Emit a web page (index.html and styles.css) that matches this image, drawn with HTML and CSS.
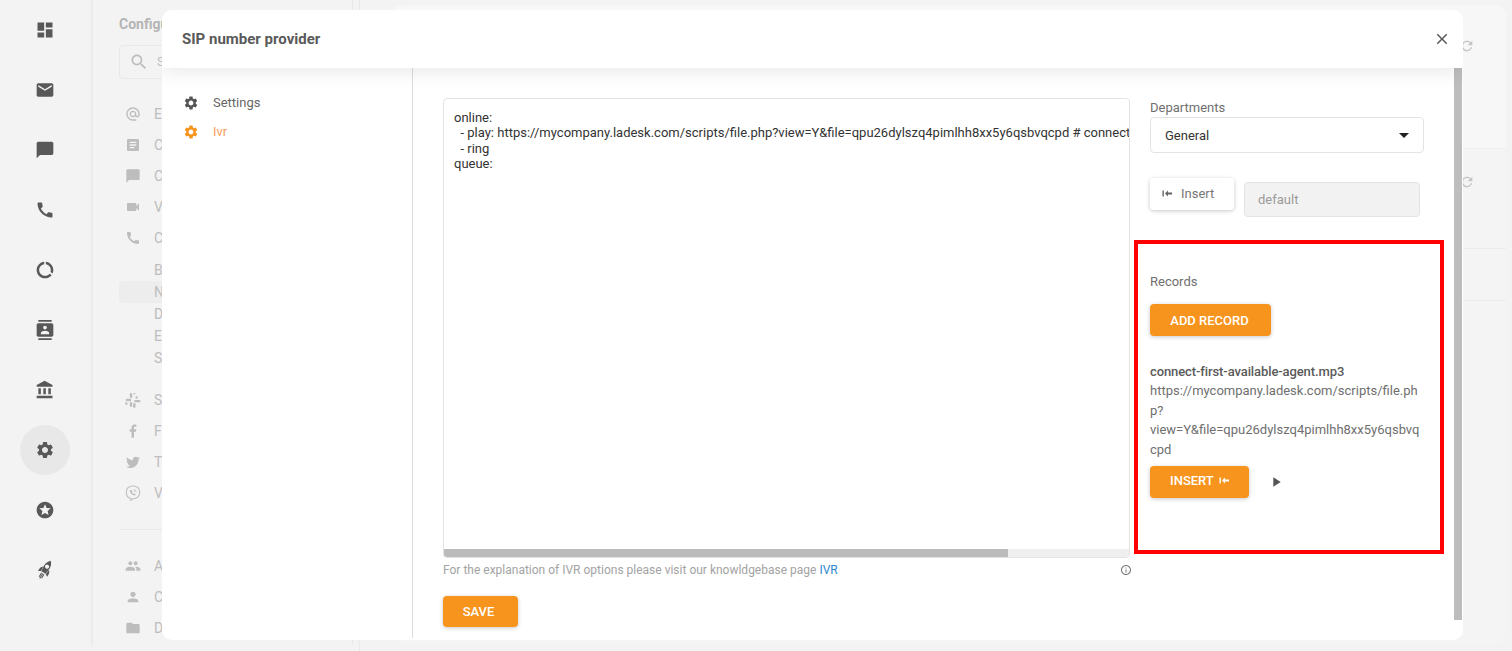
FILE: index.html
```html
<!DOCTYPE html>
<html lang="en">
<head>
<meta charset="utf-8">
<title>SIP number provider</title>
<link rel="stylesheet" href="styles.css">
</head>
<body>
<svg class="defs" width="0" height="0" aria-hidden="true">
  <symbol id="i-dash" viewBox="0 0 24 24"><path d="M3 13h8V3H3v10zm0 8h8v-6H3v6zm10 0h8V11h-8v10zm0-18v6h8V3h-8z"/></symbol>
  <symbol id="i-mail" viewBox="0 0 24 24"><path d="M20 4H4c-1.1 0-1.99.9-1.99 2L2 18c0 1.1.9 2 2 2h16c1.1 0 2-.9 2-2V6c0-1.1-.9-2-2-2zm0 4l-8 5-8-5V6l8 5 8-5v2z"/></symbol>
  <symbol id="i-chat" viewBox="0 0 24 24"><path d="M20 2H4c-1.1 0-2 .9-2 2v18l4-4h14c1.1 0 2-.9 2-2V4c0-1.1-.9-2-2-2z"/></symbol>
  <symbol id="i-call" viewBox="0 0 24 24"><path d="M20.01 15.38c-1.23 0-2.42-.2-3.53-.56-.35-.12-.74-.03-1.01.24l-1.57 1.97c-2.83-1.35-5.48-3.9-6.89-6.83l1.95-1.66c.27-.28.35-.67.24-1.02-.37-1.11-.56-2.3-.56-3.53 0-.54-.45-.99-.99-.99H4.19C3.65 3 3 3.24 3 3.99 3 13.28 10.73 21 20.01 21c.71 0 .99-.63.99-1.18v-3.45c0-.54-.45-.99-.99-.99z"/></symbol>
  <symbol id="i-donut" viewBox="0 0 24 24"><path d="M13 2.050v3.030c3.390.49 6 3.390 6 6.920 0 .9-.18 1.750-.48 2.540l2.600 1.530c.56-1.240.88-2.620.88-4.070 0-5.180-3.950-9.450-9-9.950zM12 19c-3.870 0-7-3.130-7-7 0-3.530 2.610-6.430 6-6.920V2.050c-5.060.5-9 4.760-9 9.950 0 5.520 4.470 10 9.990 10 3.310 0 6.240-1.610 8.060-4.090l-2.600-1.530C16.170 17.980 14.210 19 12 19z"/></symbol>
  <symbol id="i-contacts" viewBox="0 0 24 24"><path d="M20 0H4v2h16V0zM4 24h16v-2H4v2zM20 4H4c-1.1 0-2 .9-2 2v12c0 1.1.9 2 2 2h16c1.1 0 2-.9 2-2V6c0-1.1-.9-2-2-2zm-8 2.75c1.24 0 2.25 1.01 2.25 2.25s-1.01 2.25-2.25 2.25S9.75 10.24 9.75 9 10.76 6.75 12 6.75zM17 17H7v-1.5c0-1.67 3.33-2.5 5-2.5s5 .83 5 2.5V17z"/></symbol>
  <symbol id="i-bank" viewBox="0 0 24 24"><path d="M4 10v7h3v-7H4zm6 0v7h3v-7h-3zM2 22h19v-3H2v3zm14-12v7h3v-7h-3zm-4.5-9L2 6v2h19V6l-9.5-5z"/></symbol>
  <symbol id="i-gear" viewBox="0 0 24 24"><path d="M19.14 12.94c.04-.3.06-.61.06-.94 0-.32-.02-.64-.07-.94l2.03-1.58c.18-.14.23-.41.12-.61l-1.92-3.32c-.12-.22-.37-.29-.59-.22l-2.39.96c-.5-.38-1.03-.7-1.62-.94l-.36-2.54c-.04-.24-.24-.41-.48-.41h-3.84c-.24 0-.43.17-.47.41l-.36 2.54c-.59.24-1.13.57-1.62.94l-2.39-.96c-.22-.08-.47 0-.59.22L2.74 8.87c-.12.21-.08.47.12.61l2.03 1.58c-.05.3-.09.63-.09.94s.02.64.07.94l-2.03 1.58c-.18.14-.23.41-.12.61l1.92 3.32c.12.22.37.29.59.22l2.39-.96c.5.38 1.03.7 1.62.94l.36 2.54c.05.24.24.41.48.41h3.84c.24 0 .44-.17.47-.41l.36-2.54c.59-.24 1.13-.56 1.62-.94l2.39.96c.22.08.47 0 .59-.22l1.92-3.32c.12-.22.07-.47-.12-.61l-2.01-1.58zM12 15.6c-1.98 0-3.6-1.62-3.6-3.6s1.62-3.6 3.6-3.6 3.6 1.62 3.6 3.6-1.62 3.6-3.6 3.6z"/></symbol>
  <symbol id="i-star" viewBox="0 0 24 24"><path d="M11.99 2C6.47 2 2 6.48 2 12s4.47 10 9.99 10C17.52 22 22 17.52 22 12S17.52 2 11.99 2zm4.24 16L12 15.45 7.77 18l1.12-4.81-3.73-3.23 4.92-.42L12 5l1.92 4.53 4.92.42-3.73 3.23L16.23 18z"/></symbol>
  <symbol id="i-rocket" viewBox="0 0 24 24"><g transform="rotate(32 12 12)"><path fill-rule="evenodd" d="M12 -1C9.300 1.500 8.200 4.500 8.200 8c0 2.800.4 5.400 1 7.500h5.600c.6-2.100 1-4.700 1-7.500 0-3.500-1.100-6.500-3.800-9zM12 4.800a2.500 2.500 0 1 1 0 5 2.500 2.500 0 0 1 0-5z"/><path d="M8 9.500c-1.600 1.200-2.500 3-2.500 5.500v2.500L8.800 15.500C8.300 13.500 8 11.500 8 9.500zM16 9.500c1.600 1.200 2.500 3 2.500 5.500v2.500l-3.300-2c.5-2 .8-4 .8-6z"/><path d="M9.700 17h1.200v5.500H9.700zM11.400 17h1.200v7h-1.200zM13.100 17h1.200v5.500h-1.200z"/></g></symbol>
  <symbol id="i-search" viewBox="0 0 24 24"><path d="M15.500 14h-.79l-.28-.27C15.410 12.590 16 11.110 16 9.500 16 5.910 13.090 3 9.500 3S3 5.910 3 9.500 5.910 16 9.500 16c1.610 0 3.090-.59 4.230-1.570l.27.28v.79l5 4.990L20.490 19l-4.990-5zm-6 0C7.010 14 5 11.990 5 9.500S7.010 5 9.500 5 14 7.010 14 9.500 11.990 14 9.500 14z"/></symbol>
  <symbol id="i-at" viewBox="0 0 24 24"><path d="M12 2C6.480 2 2 6.480 2 12s4.480 10 10 10h5v-2h-5c-4.340 0-8-3.660-8-8s3.660-8 8-8 8 3.660 8 8v1.430c0 .79-.71 1.570-1.500 1.570s-1.500-.78-1.500-1.570V12c0-2.760-2.240-5-5-5s-5 2.240-5 5 2.240 5 5 5c1.380 0 2.640-.56 3.540-1.470.65.89 1.770 1.470 2.960 1.470 1.970 0 3.500-1.600 3.500-3.570V12c0-5.520-4.480-10-10-10zm0 13c-1.660 0-3-1.340-3-3s1.340-3 3-3 3 1.340 3 3-1.340 3-3 3z"/></symbol>
  <symbol id="i-article" viewBox="0 0 24 24"><path d="M19 3H5c-1.100 0-2 .9-2 2v14c0 1.100.9 2 2 2h14c1.100 0 2-.9 2-2V5c0-1.100-.9-2-2-2zm-5 14H7v-2h7v2zm3-4H7v-2h10v2zm0-4H7V7h10v2z"/></symbol>
  <symbol id="i-video" viewBox="0 0 24 24"><path d="M17 10.500V7c0-.55-.45-1-1-1H4c-.55 0-1 .45-1 1v10c0 .55.45 1 1 1h12c.55 0 1-.45 1-1v-3.500l4 4v-11l-4 4z"/></symbol>
  <symbol id="i-slack" viewBox="0 0 24 24"><path d="M9 1.500a1.800 1.800 0 0 0-1.800 1.800v5.200h3.600V3.300A1.800 1.800 0 0 0 9 1.500zM14 1.500a1.800 1.800 0 0 0-1.800 1.800v7h-10a1.800 1.800 0 0 0 0 3.400h7v-3.400h3v-7h3.600V3.300A1.800 1.800 0 0 0 14 1.500zM17.500 6.500a1.800 1.800 0 0 0-1.800 1.800v1.800h1.800a1.800 1.800 0 0 0 0-3.600zM14 12v3.500h7.800a1.800 1.800 0 0 0 0-3.500zM2 15.500a1.800 1.800 0 0 0 0 3.600h1.800v-1.800A1.800 1.800 0 0 0 2 15.500zM7.200 15.500v5.200a1.800 1.800 0 0 0 3.600 0v-5.200zM12.200 17v5a1.800 1.800 0 0 0 3.600 0v-5z"/></symbol>
  <symbol id="i-fb" viewBox="0 0 24 24"><path d="M13.500 22v-9h3l.5-3.500h-3.500V7.300c0-1 .3-1.700 1.700-1.700H17V2.400c-.3 0-1.400-.1-2.700-.1-2.700 0-4.500 1.600-4.500 4.600v2.600H7V13h2.800v9z"/></symbol>
  <symbol id="i-tw" viewBox="0 0 24 24"><path d="M22.460 6c-.77.35-1.600.58-2.460.69.88-.53 1.560-1.370 1.880-2.380-.83.5-1.750.85-2.720 1.050C18.370 4.500 17.260 4 16 4c-2.350 0-4.270 1.920-4.270 4.290 0 .34.04.67.11.98C8.280 9.090 5.110 7.380 3 4.790c-.37.63-.58 1.370-.58 2.150 0 1.490.75 2.810 1.910 3.560-.71 0-1.370-.2-1.950-.5v.03c0 2.080 1.480 3.820 3.440 4.210a4.220 4.220 0 0 1-1.930.07 4.280 4.280 0 0 0 4 2.980 8.521 8.521 0 0 1-5.330 1.840c-.34 0-.68-.02-1.020-.06C3.440 20.290 5.700 21 8.120 21 16 21 20.330 14.460 20.330 8.790c0-.19 0-.37-.01-.56.84-.6 1.560-1.360 2.140-2.230z"/></symbol>
  <symbol id="i-viber" viewBox="0 0 24 24"><path fill="none" stroke="currentColor" stroke-width="1.600" d="M12 1.500c6 0 10 2.500 10 9.500s-4 9.500-10 9.500l-3.300 2.700v-2.900C4 19.500 2 16.500 2 11 2 4 6 1.500 12 1.500z"/><path d="M8.500 7c-1 .5-1.300 1.500-.8 3 1 2.500 3 4.500 5.500 5.500 1.500.5 2.500 0 3-1 .2-.5-1.800-1.800-2.300-1.600l-.9.8c-1-.4-2.200-1.600-2.700-2.700l.8-.9c.2-.5-1.100-2.500-1.600-2.100zM13 6.500c2.300.2 4 1.900 4.200 4.200h-.9c-.2-1.800-1.500-3.100-3.300-3.300zM13 8.500c1.200.1 2 .9 2.100 2.100h-.9c-.1-.7-.5-1.100-1.200-1.200z"/></symbol>
  <symbol id="i-people" viewBox="0 0 24 24"><path d="M16 11c1.660 0 2.990-1.340 2.990-3S17.660 5 16 5c-1.660 0-3 1.340-3 3s1.340 3 3 3zm-8 0c1.660 0 2.990-1.340 2.990-3S9.660 5 8 5C6.340 5 5 6.340 5 8s1.340 3 3 3zm0 2c-2.330 0-7 1.170-7 3.500V19h14v-2.500c0-2.330-4.670-3.500-7-3.500zm8 0c-.29 0-.62.02-.97.05 1.160.84 1.970 1.970 1.970 3.450V19h6v-2.500c0-2.330-4.670-3.500-7-3.500z"/></symbol>
  <symbol id="i-person" viewBox="0 0 24 24"><path d="M12 12c2.210 0 4-1.790 4-4s-1.790-4-4-4-4 1.790-4 4 1.790 4 4 4zm0 2c-2.670 0-8 1.340-8 4v2h16v-2c0-2.660-5.330-4-8-4z"/></symbol>
  <symbol id="i-folder" viewBox="0 0 24 24"><path d="M10 4H4c-1.100 0-1.990.9-1.990 2L2 18c0 1.100.9 2 2 2h16c1.100 0 2-.9 2-2V8c0-1.100-.9-2-2-2h-8l-2-2z"/></symbol>
  <symbol id="i-close" viewBox="0 0 24 24"><path d="M19 6.410L17.590 5 12 10.590 6.410 5 5 6.410 10.590 12 5 17.590 6.410 19 12 13.410 17.590 19 19 17.590 13.410 12z"/></symbol>
  <symbol id="i-refresh" viewBox="0 0 24 24"><path d="M17.650 6.350C16.200 4.900 14.210 4 12 4c-4.420 0-7.990 3.580-7.990 8s3.570 8 7.990 8c3.730 0 6.840-2.550 7.730-6h-2.080c-.82 2.330-3.040 4-5.650 4-3.310 0-6-2.690-6-6s2.690-6 6-6c1.660 0 3.140.69 4.220 1.780L13 11h7V4l-2.350 2.350z"/></symbol>
  <symbol id="i-info" viewBox="0 0 24 24"><path d="M11 7h2v2h-2zm0 4h2v6h-2zm1-9C6.480 2 2 6.480 2 12s4.480 10 10 10 10-4.480 10-10S17.520 2 12 2zm0 18c-4.410 0-8-3.590-8-8s3.590-8 8-8 8 3.590 8 8-3.590 8-8 8z"/></symbol>
  <symbol id="i-play" viewBox="0 0 24 24"><path d="M8 5v14l11-7z"/></symbol>
  <symbol id="i-insert" viewBox="0 0 24 24"><path d="M1 5.500h3v13H1zM6.500 12L13 5.500v4.500h9v4h-9v4.500z"/></symbol>
</svg>

<div class="app">
  <nav class="rail">
    <a class="rail-item"><svg class="ico-20"><use href="#i-dash"/></svg></a>
    <a class="rail-item"><svg class="ico-20"><use href="#i-mail"/></svg></a>
    <a class="rail-item"><svg class="ico-20"><use href="#i-chat"/></svg></a>
    <a class="rail-item"><svg class="ico-20"><use href="#i-call"/></svg></a>
    <a class="rail-item"><svg class="ico-20"><use href="#i-donut"/></svg></a>
    <a class="rail-item"><svg class="ico-20"><use href="#i-contacts"/></svg></a>
    <a class="rail-item"><svg class="ico-20"><use href="#i-bank"/></svg></a>
    <a class="rail-item rail-active"><svg class="ico-20"><use href="#i-gear"/></svg></a>
    <a class="rail-item"><svg class="ico-20"><use href="#i-star"/></svg></a>
    <a class="rail-item"><svg class="ico-20"><use href="#i-rocket"/></svg></a>
  </nav>

  <aside class="config">
    <div class="config-title">Configuration</div>
    <div class="config-search"><svg class="ico-18"><use href="#i-search"/></svg><span>Search</span></div>
    <ul class="config-list">
      <li><svg class="ico-16"><use href="#i-at"/></svg>Email</li>
      <li><svg class="ico-16"><use href="#i-article"/></svg>Contact forms</li>
      <li><svg class="ico-16"><use href="#i-chat"/></svg>Chat</li>
      <li><svg class="ico-16"><use href="#i-video"/></svg>Video</li>
      <li><svg class="ico-16"><use href="#i-call"/></svg>Call</li>
    </ul>
    <ul class="config-sub">
      <li>Buttons</li>
      <li class="config-sub-active">Numbers</li>
      <li>Devices</li>
      <li>Extensions</li>
      <li>Settings</li>
    </ul>
    <ul class="config-list config-social">
      <li><svg class="ico-16"><use href="#i-slack"/></svg>Slack</li>
      <li><svg class="ico-16"><use href="#i-fb"/></svg>Facebook</li>
      <li><svg class="ico-16"><use href="#i-tw"/></svg>Twitter</li>
      <li><svg class="ico-16"><use href="#i-viber"/></svg>Viber</li>
    </ul>
    <ul class="config-list config-users">
      <li><svg class="ico-16"><use href="#i-people"/></svg>Agents</li>
      <li><svg class="ico-16"><use href="#i-person"/></svg>Customers</li>
      <li><svg class="ico-16"><use href="#i-folder"/></svg>Departments</li>
    </ul>
  </aside>

  <main class="page">
    <div class="page-inner">
      <section class="page-card page-card-top"><svg class="ico-16 page-refresh"><use href="#i-refresh"/></svg></section>
      <section class="page-card page-card-mid"><svg class="ico-16 page-refresh"><use href="#i-refresh"/></svg></section>
      <section class="page-card page-card-row"></section>
      <section class="page-card page-card-rest"></section>
    </div>
  </main>
</div>

<div class="modal">
  <header class="modal-head">
    <h1 class="modal-title">SIP number provider</h1>
    <svg class="modal-close"><use href="#i-close"/></svg>
  </header>
  <div class="modal-body">
    <nav class="modal-nav">
      <a class="modal-link"><svg class="ico-16"><use href="#i-gear"/></svg>Settings</a>
      <a class="modal-link modal-link-active"><svg class="ico-16"><use href="#i-gear"/></svg>Ivr</a>
    </nav>
    <div class="modal-main">
      <div class="editor-col">
        <div class="editor">
          <pre class="editor-text">online:
  - play: https://mycompany.ladesk.com/scripts/file.php?view=Y&amp;file=qpu26dylszq4pimlhh8xx5y6qsbvqcpd # connect-first-available-agent.mp3
  - ring
queue:</pre>
          <div class="editor-scroll"><div class="editor-thumb"></div></div>
        </div>
        <div class="hint">
          <span>For the explanation of IVR options please visit our knowldgebase page <a class="hint-link">IVR</a></span>
          <svg class="ico-12"><use href="#i-info"/></svg>
        </div>
        <button class="btn btn-orange btn-save">SAVE</button>
      </div>
      <div class="side-col">
        <label class="side-label">Departments</label>
        <div class="select"><span>General</span><i class="select-caret"></i></div>
        <div class="insert-row">
          <button class="btn btn-white"><svg class="ico-btn"><use href="#i-insert"/></svg>Insert</button>
          <div class="default-field">default</div>
        </div>
        <div class="records">
          <div class="records-label">Records</div>
          <button class="btn btn-orange btn-add">ADD RECORD</button>
          <div class="record-name">connect-first-available-agent.mp3</div>
          <div class="record-url">https://mycompany.ladesk.com/scripts/file.php?view=Y&amp;file=qpu26dylszq4pimlhh8xx5y6qsbvqcpd</div>
          <div class="record-actions">
            <button class="btn btn-orange btn-insert">INSERT<svg class="ico-btn"><use href="#i-insert"/></svg></button>
            <svg class="ico-play"><use href="#i-play"/></svg>
          </div>
        </div>
      </div>
      <div class="modal-scrollbar"></div>
    </div>
  </div>
</div>
</body>
</html>
```
FILE: styles.css
```css
* { box-sizing: border-box; }
html, body { margin: 0; height: 100%; overflow: hidden; }
body { background: #f3f3f3; font-family: Roboto, "Liberation Sans", sans-serif; font-size: 13px; color: #555; }
.defs { position: absolute; }
svg { fill: currentColor; display: block; flex: none; }
.ico-20 { width: 20px; height: 20px; }
.ico-18 { width: 20px; height: 20px; }
.ico-16 { width: 16px; height: 16px; }
.ico-12 { width: 12px; height: 12px; }
.ico-btn { width: 11px; height: 11px; }

.app { display: flex; height: 651px; }
.rail { width: 90px; flex: none; display: flex; flex-direction: column; align-items: center; padding-top: 5px; gap: 10px; }
.rail-item { width: 50px; height: 50px; display: flex; align-items: center; justify-content: center; color: #585858; border-radius: 50%; }
.rail-active { background: #e8e8e8; }

.config { width: 261px; flex: none; height: 645px; padding: 15px 0 0 26px; border-left: 1px solid #e9e9e9; border-right: 1px solid #e8e8e8; margin-left: 2px; box-shadow: -2px 0 0 #eeeeee; color: #bdbdbd; overflow: hidden; font-size: 14px; }
.config-title { font-weight: 700; font-size: 14px; line-height: 18px; color: #b5b5b5; }
.config-search { margin-top: 12px; height: 34px; width: 220px; border: 1px solid #e8e8e8; border-radius: 4px; display: flex; align-items: center; gap: 8px; padding-left: 9px; font-size: 12px; }
.config-list, .config-sub { list-style: none; margin: 0; padding: 0; }
.config-list li { height: 31px; display: flex; align-items: center; gap: 13px; padding-left: 6px; }
.config-list { margin-top: 19px; }
.config-sub { margin-top: 6px; margin-bottom: 15px; }
.config-sub li { height: 22px; line-height: 22px; padding-left: 35px; margin-right: 20px; border-radius: 4px; }
.config-sub-active { background: #ededed; }
.config-social { margin-top: 0; padding-bottom: 21px; border-bottom: 1px solid #e8e8e8; margin-right: 20px; }
.config-users { margin-top: 20px; }

.page { flex: 1; min-width: 0; padding: 5px 6px 6px 0; display: flex; border-left: 1px solid #e9e9e9; margin-left: 6px; }
.page-inner { flex: 1; margin-left: 32px; display: flex; flex-direction: column; border-radius: 10px; overflow: hidden; background: #f4f4f4; }
.page-card { position: relative; }
.page-card-top { height: 143px; background: #f7f7f7; }
.page-card-mid { height: 100px; border-top: 1px solid #efefef; }
.page-card-row { height: 52px; border-top: 1px solid #ececec; }
.page-card-rest { flex: 1; border-top: 1px solid #ececec; }
.page-refresh { position: absolute; right: 31px; top: 33px; color: #c4c4c4; }
.page-card-mid .page-refresh { top: 25px; }

.modal { position: absolute; left: 162px; top: 10px; width: 1301px; height: 630px; background: #fff; border-radius: 10px; display: flex; flex-direction: column; overflow: hidden; }
.modal-head { height: 58px; flex: none; display: flex; align-items: center; justify-content: space-between; padding: 0 12px 0 20px; box-shadow: 0 4px 18px rgba(0,0,0,.09); position: relative; z-index: 1; background: #fff; }
.modal-title { margin: 0; font-size: 15px; font-weight: 700; color: #5a5a5a; }
.modal-close { width: 18px; height: 18px; color: #5a5a5a; }
.modal-body { flex: 1; display: flex; min-height: 0; }
.modal-nav { width: 251px; flex: none; height: 570px; border-right: 1px solid #dcdcdc; padding-top: 20px; }
.modal-link { height: 29px; display: flex; align-items: center; gap: 14px; padding-left: 21px; font-size: 13px; color: #666; }
.modal-link svg { color: #555; }
.modal-link-active { color: #f9a05a; }
.modal-link-active svg { color: #f7941d; }

.modal-main { flex: 1; min-width: 0; display: flex; padding: 30px 0 0 30px; position: relative; }
.editor-col { width: 687px; flex: none; }
.editor { height: 460px; border: 1px solid #e3e3e3; border-radius: 4px; display: flex; flex-direction: column; overflow: hidden; }
.editor-text { flex: 1; margin: 0; padding: 11px 0 0 10px; font-family: Roboto, "Liberation Sans", sans-serif; font-size: 13px; line-height: 15.300px; color: #333; overflow: hidden; white-space: pre; }
.editor-scroll { height: 8px; background: #efefef; flex: none; }
.editor-thumb { width: 564px; height: 8px; background: #bbb; }
.hint { display: flex; justify-content: space-between; align-items: center; padding-top: 4px; height: 20px; font-size: 12px; color: #a3a3a3; }
.hint svg { color: #777; margin-right: -2px; }
.hint-link { color: #2b87d0; }

.btn { font-family: Roboto, "Liberation Sans", sans-serif; font-size: 13px; border: 0; border-radius: 4px; display: flex; align-items: center; padding: 0; }
.btn-orange { background: #f7941d; color: #fff; font-weight: 500; box-shadow: 0 1px 4px rgba(0,0,0,.22); }
.btn-save { width: 75px; height: 31px; margin-top: 18px; justify-content: center; padding-right: 4px; }
.btn-white { width: 84px; height: 32px; background: #fff; color: #777; gap: 8px; padding: 0 0 2px 12px; box-shadow: 0 1px 4px rgba(0,0,0,.22); }
.btn-white .ico-btn { color: #666; }

.side-col { width: 274px; margin-left: 20px; flex: none; }
.side-label { display: block; line-height: 18px; padding-top: 1px; height: 19px; color: #6f6f6f; }
.select { height: 36px; border: 1px solid #e3e3e3; border-radius: 4px; display: flex; align-items: center; justify-content: space-between; padding: 0 14px; color: #333; }
.select-caret { width: 0; height: 0; border-left: 5px solid transparent; border-right: 5px solid transparent; border-top: 5px solid #222; }
.insert-row { display: flex; gap: 10px; margin-top: 25px; }
.default-field { width: 176px; height: 35px; margin-top: 4px; background: #f2f2f2; border: 1px solid #e3e3e3; border-radius: 4px; padding-left: 13px; line-height: 33px; color: #9b9b9b; }

.records { width: 310px; height: 314px; margin: 23px 0 0 -16px; border: 4px solid #f00; padding: 30px 12px 0 12px; }
.records-label { line-height: 16px; color: #6f6f6f; }
.btn-add { width: 121px; height: 32px; margin-top: 14px; justify-content: center; padding-right: 2px; }
.record-name { margin-top: 26px; line-height: 19px; color: #5a5a5a; font-weight: 500; font-size: 13px; letter-spacing: -.1px; }
.record-url { width: 274px; line-height: 19.700px; overflow-wrap: anywhere; color: #6f6f6f; }
.btn-insert { width: 99px; height: 32px; gap: 5px; padding: 0 0 2px 20px; }
.record-actions { display: flex; align-items: center; gap: 19px; margin-top: 6px; }
.ico-play { width: 16px; height: 16px; color: #555; }

.modal-scrollbar { position: absolute; right: 1px; top: 0; bottom: 20px; width: 8px; background: #bdbdbd; }
```
